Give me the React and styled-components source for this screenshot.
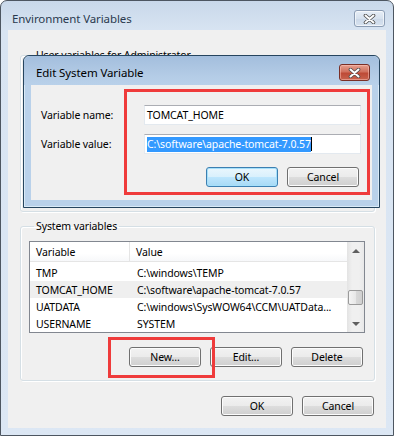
import React from 'react';
import styled, { createGlobalStyle } from 'styled-components';

const systemVars = [
  ['TMP', 'C:\\windows\\TEMP'],
  ['TOMCAT_HOME', 'C:\\software\\apache-tomcat-7.0.57', true],
  ['UATDATA', 'C:\\windows\\SysWOW64\\CCM\\UATData...'],
  ['USERNAME', 'SYSTEM'],
];

const CloseGlyph = () => (
  <svg width="13" height="10" viewBox="0 0 13 10">
    <path d="M2.5 1.5 L10.5 8.5 M10.5 1.5 L2.5 8.5" stroke="#4b4b4b" strokeWidth="3.6" strokeLinecap="round" fill="none" />
    <path d="M2.5 1.5 L10.5 8.5 M10.5 1.5 L2.5 8.5" stroke="#fff" strokeWidth="2" strokeLinecap="round" fill="none" />
  </svg>
);

const ListView = ({ rows, height }) => (
  <List $height={height}>
    <ListMain>
      <HeaderRow>
        <HeadCell $first>Variable</HeadCell>
        <HeadCell>Value</HeadCell>
      </HeaderRow>
      <Rows>
        {rows.map(([name, value, hot]) => (
          <Row key={name} $hot={hot}>
            <Cell $first>{name}</Cell>
            <Cell>{value}</Cell>
          </Row>
        ))}
      </Rows>
    </ListMain>
    <ScrollBar>
      <Arrow><Tri /></Arrow>
      <Track><Thumb $offset={31} /></Track>
      <Arrow><Tri $down /></Arrow>
    </ScrollBar>
  </List>
);

const App = () => (
  <>
    <Global />
    <Window>
      <TitleBar>
        <Title>Environment Variables</Title>
        <CloseBtn><CloseGlyph /></CloseBtn>
      </TitleBar>
      <Content>
        {/* user variables group, its contents sit under the edit dialog */}
        <Group $height={164}>
          <Legend>User variables for Administrator</Legend>
        </Group>
        <Group $gap>
          <Legend>System variables</Legend>
          <ListView rows={systemVars} height={92} />
          <ButtonRow>
            <Button>New...</Button>
            <Button>Edit...</Button>
            <Button>Delete</Button>
          </ButtonRow>
        </Group>
        <Footer>
          <Button>OK</Button>
          <Button>Cancel</Button>
        </Footer>
      </Content>

      <Dialog>
        <TitleBar $active>
          <Title $active>Edit System Variable</Title>
          <CloseBtn $red><CloseGlyph /></CloseBtn>
        </TitleBar>
        <DialogBody>
          <Form>
            <Label>Variable name:</Label>
            <Field>TOMCAT_HOME</Field>
            <Label>Variable value:</Label>
            <Field><Selected>C:\software\apache-tomcat-7.0.57</Selected><Caret /></Field>
          </Form>
          <DialogButtons>
            <Button $primary>OK</Button>
            <Button>Cancel</Button>
          </DialogButtons>
        </DialogBody>
        <Mark $left={100} $top={33} $w={246} $h={106} />
      </Dialog>

      <Mark $left={107} $top={336} $w={107} $h={41} />
    </Window>
  </>
);

const Global = createGlobalStyle`
  html, body {
    margin: 0;
    padding: 0;
    background: #ffffff;
  }
  body {
    font-family: "Noto Sans", "Open Sans", sans-serif;
    font-size: 10.5px;
    letter-spacing: -0.1px;
    color: #000;
  }
`;

const Window = styled.div`
  position: relative;
  width: 394px;
  height: 436px;
  box-sizing: border-box;
  border: 1px solid #4d5661;
  border-radius: 7px 7px 0 0;
  padding: 0 7px 7px 7px;
  display: flex;
  flex-direction: column;
  background: linear-gradient(#c9d8ea, #d8e4f2 30px, #dce7f4);
  overflow: hidden;
`;

const TitleBar = styled.div`
  height: 29px;
  box-sizing: border-box;
  margin: 0 -7px;
  padding: ${({ $active }) => ($active ? '4px 9px 0 12px' : '6px 8px 0 11px')};
  display: flex;
  align-items: center;
  justify-content: space-between;
  background: ${({ $active }) =>
    $active ? 'linear-gradient(#a3bedd, #b4cce6 20px, #b9d1ea)' : 'transparent'};
  border-radius: 6px 6px 0 0;
`;

const Title = styled.span`
  font-size: 11.5px;
  color: ${({ $active }) => ($active ? '#000' : '#2a3a4e')};
`;

const CloseBtn = styled.div`
  width: 31px;
  height: 17px;
  box-sizing: border-box;
  border-radius: 3px;
  display: flex;
  align-items: center;
  justify-content: center;
  border: 1px solid ${({ $red }) => ($red ? '#7a2f26' : '#8c9db4')};
  background: ${({ $red }) =>
    $red
      ? 'linear-gradient(#e6a08f, #d0705d 45%, #be4a36 55%, #c8634e)'
      : 'linear-gradient(#e7eef7, #d6e1ee 50%, #cbd8e8 51%, #d7e3f0)'};
  box-shadow: inset 0 0 0 1px ${({ $red }) => ($red ? 'rgba(255,200,190,0.5)' : 'rgba(255,255,255,0.6)')};
`;

const Content = styled.div`
  flex: 1;
  background: #f0f0f0;
  padding: 0 11px 0 12px;
  display: flex;
  flex-direction: column;
`;

const Group = styled.fieldset`
  margin: ${({ $gap }) => ($gap ? '7px' : '18px')} 0 0 0;
  padding: 8px 9px 13px 8px;
  min-width: 0;
  box-sizing: border-box;
  ${({ $height }) => ($height ? `height: ${$height}px;` : '')}
  border: 1px solid #d5dfe5;
  border-radius: 3px;
  box-shadow: inset 1px 1px 0 #fff, 1px 1px 0 #fff;
`;

const Legend = styled.legend`
  margin-left: 5px;
  padding: 0 2px;
  line-height: 14px;
`;

const List = styled.div`
  height: ${({ $height }) => $height}px;
  box-sizing: border-box;
  border: 1px solid #828790;
  background: #fff;
  display: flex;
  overflow: hidden;
`;

const ListMain = styled.div`
  flex: 1;
  min-width: 0;
  display: flex;
  flex-direction: column;
`;

const HeaderRow = styled.div`
  height: 21px;
  box-sizing: border-box;
  display: flex;
  border-bottom: 1px solid #e5e5e5;
  background: linear-gradient(#fff, #fff 60%, #f7f8fa);
`;

const HeadCell = styled.div`
  display: flex;
  align-items: center;
  padding-left: 6px;
  ${({ $first }) => ($first ? 'width: 93px; border-right: 1px solid #e5e5e5;' : 'flex: 1;')}
`;

const Rows = styled.div`
  padding-top: 2px;
`;

const Row = styled.div`
  height: 17px;
  display: flex;
  align-items: center;
  background: ${({ $hot }) => ($hot ? '#efefef' : 'transparent')};
`;

const Cell = styled.div`
  padding-left: 6px;
  white-space: nowrap;
  overflow: hidden;
  ${({ $first }) => ($first ? 'width: 94px; flex: none;' : 'flex: 1; padding-left: 7px;')}
`;

const ScrollBar = styled.div`
  width: 17px;
  flex: none;
  display: flex;
  flex-direction: column;
  background: linear-gradient(90deg, #e3e3e3, #f0f0f0 30%, #f0f0f0 70%, #e8e8e8);
`;

const Arrow = styled.div`
  height: 17px;
  display: flex;
  align-items: center;
  justify-content: center;
`;

const Tri = styled.div`
  width: 0;
  height: 0;
  border-left: 4px solid transparent;
  border-right: 4px solid transparent;
  ${({ $down }) => ($down ? 'border-top: 4px solid #606060;' : 'border-bottom: 4px solid #606060;')}
`;

const Track = styled.div`
  flex: 1;
`;

const Thumb = styled.div`
  margin: ${({ $offset }) => $offset}px 1px 0 1px;
  height: 15px;
  box-sizing: border-box;
  border: 1px solid #9a9a9a;
  border-radius: 2px;
  background: linear-gradient(90deg, #f4f4f4, #e8e8e8 50%, #d9d9d9 51%, #d0d0d0);
`;

const ButtonRow = styled.div`
  margin-top: 14px;
  margin-right: 2px;
  display: flex;
  justify-content: flex-end;
  gap: 9px;
`;

const Footer = styled.div`
  margin-top: 15px;
  margin-right: 1px;
  display: flex;
  justify-content: flex-end;
  gap: 9px;
`;

const Button = styled.div`
  width: 72px;
  height: 20px;
  box-sizing: border-box;
  border-radius: 3px;
  display: flex;
  align-items: center;
  justify-content: center;
  border: 1px solid ${({ $primary }) => ($primary ? '#3c7fb1' : '#707070')};
  background: ${({ $primary }) =>
    $primary
      ? 'linear-gradient(#eaf6fd, #d9f0fc 50%, #bee6fd 51%, #a7d9f5)'
      : 'linear-gradient(#f2f2f2, #ebebeb 50%, #dddddd 51%, #cfcfcf)'};
  box-shadow: inset 0 0 0 1px ${({ $primary }) => ($primary ? '#a6e0fa' : '#fcfcfc')};
`;

const Dialog = styled.div`
  position: absolute;
  left: 22px;
  top: 54px;
  width: 357px;
  height: 153px;
  box-sizing: border-box;
  border: 1px solid #26455f;
  border-radius: 6px 6px 0 0;
  padding: 0 7px 7px 7px;
  background: #b9d1ea;
  box-shadow: inset 0 0 0 1px #d9eaf7;
  display: flex;
  flex-direction: column;
`;

const DialogBody = styled.div`
  flex: 1;
  background: #f0f0f0;
  padding: 20px 11px 0 10px;
  display: flex;
  flex-direction: column;
`;

const Form = styled.div`
  display: grid;
  grid-template-columns: 103px 217px;
  grid-auto-rows: 20px;
  row-gap: 9px;
  align-items: center;
`;

const Label = styled.span``;

const Field = styled.div`
  height: 20px;
  box-sizing: border-box;
  border: 1px solid #e3e9ef;
  border-top-color: #abadb3;
  background: #fff;
  padding-left: 2px;
  display: flex;
  align-items: center;
  white-space: nowrap;
`;

const Selected = styled.span`
  background: #3399ff;
  color: #fff;
  line-height: 15px;
`;

const Caret = styled.span`
  width: 1px;
  height: 14px;
  background: #000;
`;

const DialogButtons = styled.div`
  margin-top: 13px;
  padding-right: 2px;
  display: flex;
  justify-content: flex-end;
  gap: 9px;
`;

const Mark = styled.div`
  position: absolute;
  left: ${({ $left }) => $left}px;
  top: ${({ $top }) => $top}px;
  width: ${({ $w }) => $w}px;
  height: ${({ $h }) => $h}px;
  box-sizing: border-box;
  border: 3px solid #ef3b3b;
  pointer-events: none;
`;

export default App;
